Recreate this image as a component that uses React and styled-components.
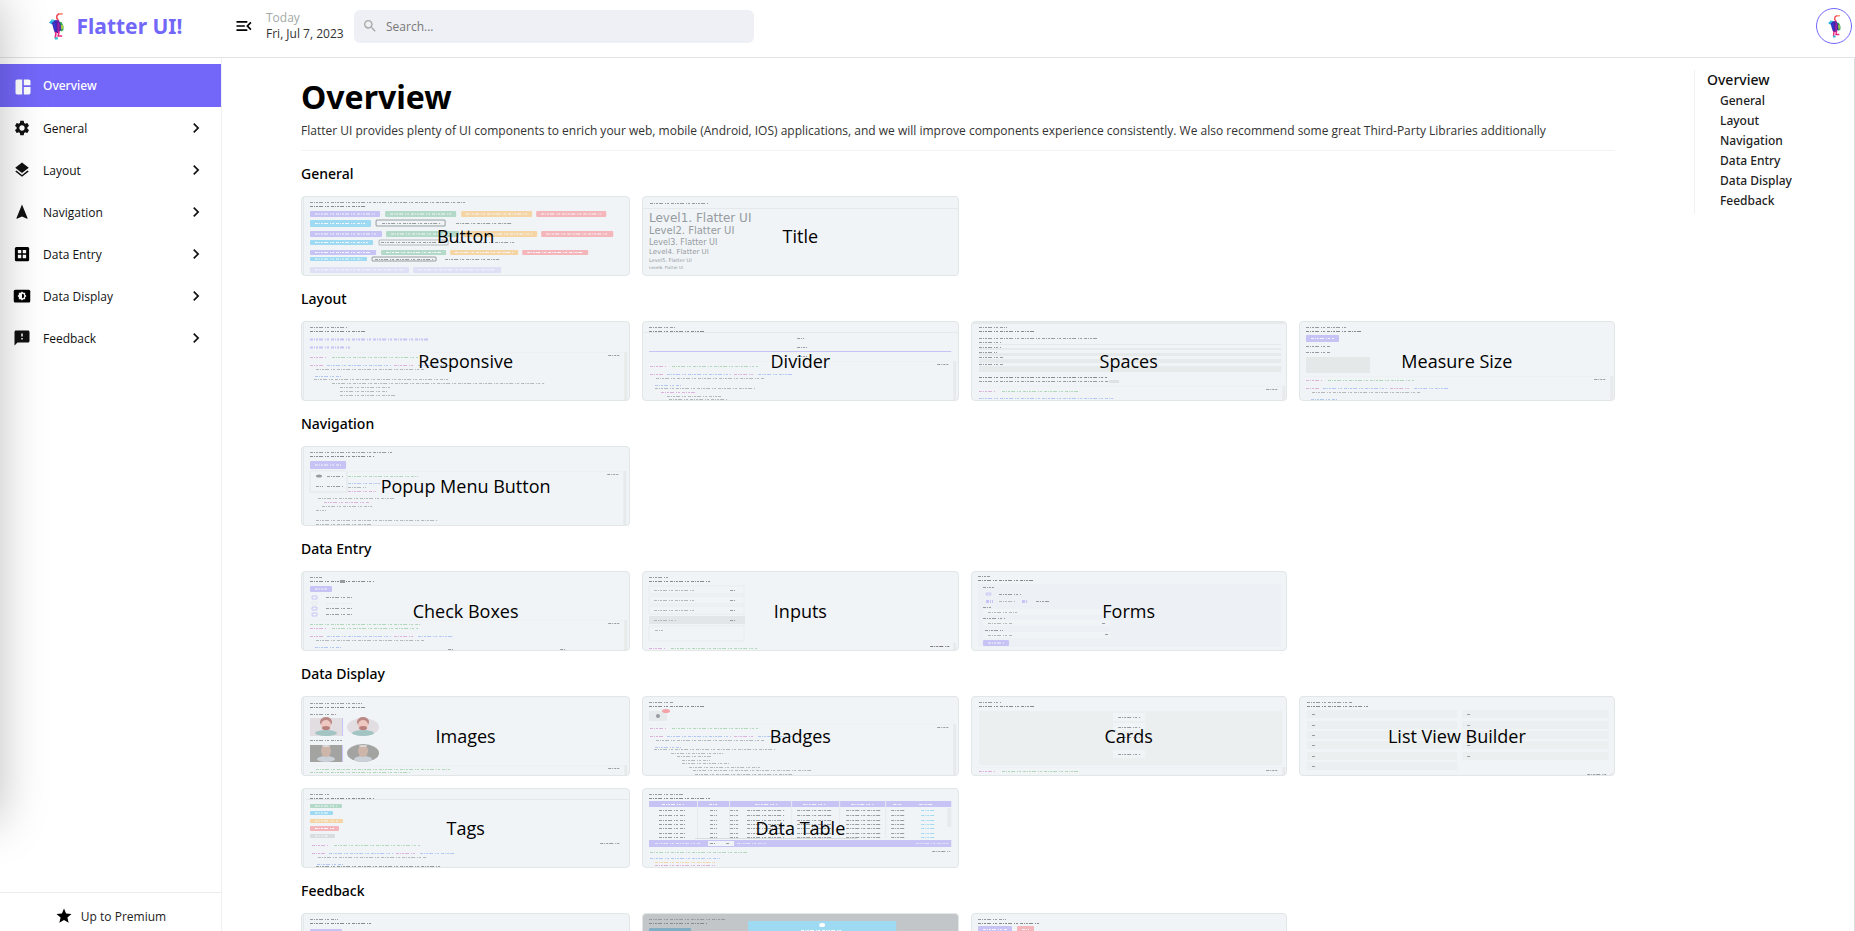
import React from "react";
import styled, { createGlobalStyle } from "styled-components";
import {
  MdSpaceDashboard,
  MdSettings,
  MdLayers,
  MdNavigation,
  MdFeedback,
  MdChevronRight,
  MdMenuOpen,
  MdSearch,
  MdStar,
} from "react-icons/md";

const c = {
  accent: "#7367fa",
  ink: "#000",
  purple: "#c7c3f5",
  pale: "#dfe0f5",
  green: "#b3d9c8",
  orange: "#f4d5a3",
  red: "#f4b6bb",
  blue: "#9fdaf3",
  text: "#969b9f",
  soft: "#b3b8bb",
  gray: "#e6eaeb",
  card: "#f0f4f7",
  pinkCode: "#dcb2dd",
  greenCode: "#b0d8b8",
  blueCode: "#b2c8f4",
};

const headingFont = `"Noto Sans", "Open Sans", sans-serif`;

const GlobalStyle = createGlobalStyle`
  * { box-sizing: border-box; }
  body {
    margin: 0;
    background: #fff;
    color: ${c.ink};
    font-family: "Open Sans", "Noto Sans", sans-serif;
    font-size: 12px;
  }
  button, input { font: inherit; color: inherit; }
`;

const Page = styled.div`
  height: 100vh;
  display: flex;
  flex-direction: column;
  overflow: hidden;
`;

const DrawerShade = styled.div`
  position: fixed;
  top: 0;
  bottom: 110px;
  left: -304px;
  width: 304px;
  box-shadow: 0 0 44px rgba(0, 0, 0, 0.25);
  pointer-events: none;
  z-index: 5;
`;

const Header = styled.header`
  flex: none;
  height: 58px;
  padding: 0 3px 5px 0;
  display: flex;
  align-items: center;
  border-bottom: 1px solid #e2e3e5;
`;

const Brand = styled.a`
  width: 222px;
  padding-left: 9px;
  display: flex;
  align-items: center;
  justify-content: center;
  gap: 13px;
  color: ${c.accent};
  font-family: ${headingFont};
  font-size: 21px;
  font-weight: 700;
  text-decoration: none;
`;

const IconButton = styled.button`
  margin: 0 12px;
  padding: 0;
  width: 20px;
  height: 20px;
  border: 0;
  background: none;
  display: grid;
  place-items: center;
`;

const DateBlock = styled.div`
  width: 88px;
  line-height: 16px;
  color: #333;
`;

const Today = styled.div`
  color: #a3aaa5;
`;

const Search = styled.label`
  width: 400px;
  height: 33px;
  padding: 0 8px;
  display: flex;
  align-items: center;
  gap: 8px;
  border-radius: 6px;
  background: #eff0f5;
  color: #a3aaa5;
`;

const SearchInput = styled.input`
  flex: 1;
  border: 0;
  outline: 0;
  padding: 0;
  background: none;
  color: #333;
  &::placeholder { color: #777; opacity: 1; }
`;

const Avatar = styled.button`
  margin-left: auto;
  width: 36px;
  height: 36px;
  padding: 0;
  border: 1px solid ${c.accent};
  border-radius: 50%;
  background: #fff;
  display: grid;
  place-items: center;
`;

const Body = styled.div`
  flex: 1;
  min-height: 0;
  display: flex;
`;

const Sidebar = styled.aside`
  flex: none;
  width: 222px;
  border-right: 1px solid #f0f0f1;
  display: flex;
  flex-direction: column;
`;

const Nav = styled.nav`
  flex: 1;
  padding-top: 6px;
`;

const NavItem = styled.a`
  height: ${(p) => (p.$active ? 43 : 42)}px;
  padding: 0 15px 0 13px;
  display: flex;
  align-items: center;
  gap: 12px;
  color: ${(p) => (p.$active ? "#fff" : "#111")};
  background: ${(p) => (p.$active ? c.accent : "none")};
  font-family: ${(p) => (p.$active ? headingFont : "inherit")};
  font-weight: ${(p) => (p.$active ? 500 : 400)};
  text-decoration: none;
`;

const NavLabel = styled.span`
  flex: 1;
`;

const Premium = styled.button`
  height: 39px;
  padding: 8px 0 0;
  border: 0;
  border-top: 1px solid #ececee;
  background: none;
  color: #222;
  display: flex;
  align-items: center;
  justify-content: center;
  gap: 8px;
`;

const Main = styled.main`
  flex: 1;
  min-width: 0;
  padding-top: 12px;
  display: flex;
  border-right: 1px solid #d8dcde;
  overflow-y: auto;
  scrollbar-width: none;
`;

const Content = styled.div`
  flex: 1;
  min-width: 0;
  padding: 5px 79px 0;
`;

const PageTitle = styled.h1`
  margin: 0;
  font-family: ${headingFont};
  font-size: 32px;
  line-height: 44px;
  font-weight: 700;
`;

const Intro = styled.p`
  margin: 4px 0 0;
  padding-bottom: 11px;
  border-bottom: 1px solid #f3f3f4;
  line-height: 16px;
  color: #333;
`;

const Section = styled.section`
  padding-top: 13px;
`;

const SectionTitle = styled.h2`
  margin: 0 0 12px;
  font-family: ${headingFont};
  font-size: 14px;
  line-height: 20px;
  font-weight: 500;
`;

const CardGrid = styled.div`
  display: grid;
  grid-template-columns: 329fr 316fr 316fr 316fr;
  gap: 12px;
`;

const Card = styled.button`
  min-width: 0;
  height: 80px;
  padding: 0;
  display: grid;
  border: 1px solid #e1e6e7;
  border-radius: 4px;
  background: ${(p) => (p.$dim ? "#c3c6c9" : c.card)};
  overflow: hidden;
`;

const Preview = styled.svg`
  grid-area: 1 / 1;
  width: 100%;
  height: 78px;
  display: block;
`;

const CardTitle = styled.span`
  grid-area: 1 / 1;
  place-self: center;
  font-size: 18px;
  line-height: 24px;
`;

const Toc = styled.nav`
  flex: none;
  align-self: flex-start;
  width: 160px;
  height: 144px;
  padding-left: 12px;
  border-left: 1px solid #f0f0f2;
  font-family: ${headingFont};
  font-weight: 500;
`;

const TocTitle = styled.a`
  display: block;
  color: #111;
  font-size: 14px;
  line-height: 20px;
  text-decoration: none;
`;

const TocList = styled.ul`
  margin: 0;
  padding: 1px 0 0 13px;
  list-style: none;
`;

const TocLink = styled.a`
  display: block;
  color: #222;
  line-height: 20px;
  text-decoration: none;
`;

function Mascot({ width, height }) {
  return (
    <svg width={width} height={height} viewBox="0 0 15 27" aria-hidden="true">
      <path d="M13.5.8H10L8 2.500 7.700 5l1.600 2.500L8.500 9.500" fill="none" stroke="#f04a5c" strokeWidth="1.6" />
      <path d="M10 .8h3.500" stroke="#ff9a7a" strokeWidth="1.6" />
      <path d="M0 9.500 3 7l3 0 .5 3L3 11.500z" fill="#1ba8e8" />
      <path d="M2 6.500h3v2H2z" fill="#46c8d8" />
      <path d="M10 9h2.500l2 4v4l-2 1.500-3-2z" fill="#35a853" />
      <path d="M12 12h2v4h-2z" fill="#a4c93c" />
      <path d="M3 10 6.500 7 10 7.500 11.500 11 12 17l-3 3H6L4.500 16z" fill="#4b22b0" />
      <path d="M8.500 8 10.500 11l0 7-2 1z" fill="#a0229c" />
      <path d="M4 10.500 6 9l1 6-1 3z" fill="#2a3ed0" />
      <path d="m7 19-.7 6M10 18.500l-.8 4.500h4" fill="none" stroke="#ea2a80" strokeWidth="1.7" />
      <path d="M5.800 24.200h3v2.300h-3z" fill="#34b8d8" />
    </svg>
  );
}

function DataEntryIcon() {
  return (
    <svg width="18" height="18" viewBox="0 0 24 24" aria-hidden="true">
      <rect x="2.5" y="2.5" width="19" height="19" rx="2" fill="#000" />
      <path d="M6.500 6.500h4.500v4.500H6.500zM13 6.500h4.500v4.500H13zM6.500 13h4.500v4.500H6.500zM13 13h4.500v4.500H13z" fill="#fff" />
    </svg>
  );
}

function DataDisplayIcon() {
  return (
    <svg width="18" height="18" viewBox="0 0 24 24" aria-hidden="true">
      <rect x="1" y="3.5" width="22" height="17" rx="2" fill="#000" />
      <path d="m12 6 1.800 1.800h2.400v2.400L18 12l-1.800 1.800v2.400h-2.400L12 18l-1.800-1.800H7.800v-2.400L6 12l1.800-1.800V7.800h2.400z" fill="#fff" />
      <path d="M12 9a3 3 0 0 1 0 6z" fill="#000" />
    </svg>
  );
}

/* Marks of a preview: t = a line of tiny writing, r = block, o = outlined block,
   w = button with writing on it, x = readable text, e = ellipse. */
const writing = "3 1 1 1 2 1 4 2 1 1 2 2";

function Mark({ m }) {
  const [kind, x, y, a, b, d] = m;
  switch (kind) {
    case "t":
      return (
        <line x1={x} x2={x + a} y1={y + 0.5} y2={y + 0.5} stroke={b || c.text} strokeWidth={d || 1} strokeDasharray={writing} />
      );
    case "r":
      return <rect x={x} y={y} width={a} height={b} fill={d} />;
    case "o":
      return <rect x={x} y={y} width={a} height={b} rx="1" fill="none" stroke={d} strokeWidth="1" />;
    case "e":
      return <ellipse cx={x} cy={y} rx={a} ry={b} fill={d} />;
    case "x":
      return <text x={x} y={y} fontSize={a} fill={c.text} fontFamily="DejaVu Sans, sans-serif">{b}</text>;
    default:
      return (
        <g>
          <rect x={x} y={y} width={a} height={b} rx="1" fill={d} />
          <line x1={x + 5} x2={x + a - 5} y1={y + b / 2} y2={y + b / 2} stroke="#f5f7fc" strokeWidth="1" strokeDasharray={writing} />
        </g>
      );
  }
}

const head = (x, w1, w2) => [["t", x, 5, w1], ["t", x, 9, w2, "#85898c", 1]];
const code = (y, x = 7) => [
  ["t", x, y, 16, c.pinkCode],
  ["t", x + 22, y, 86, c.greenCode],
  ["t", x, y + 8, 14, c.pinkCode],
  ["t", x + 17, y + 8, 64, c.blueCode],
  ["t", x + 84, y + 8, 20, c.pinkCode],
  ["t", x + 108, y + 8, 36, c.blueCode],
  ["t", x + 6, y + 12, 108, c.soft],
  ["t", x + 5, y + 19, 26, c.blueCode],
];
const buttonRow = (y, h, list) => {
  const tones = [c.purple, c.green, c.orange, c.red];
  return list.map(([x, w], i) => ["w", x, y, w, h, tones[i]]);
};
const scrollbar = (x, y) => [["r", 4, y, x - 2, 1, "#edf1f3"], ["r", x, y, 3, 78 - y, c.gray], ["t", x - 16, y + 3, 11]];
const drawnPortrait = (cx, cy) => [
  ["e", cx, cy + 8, 11, 3, "#a2c4c3"],
  ["e", cx, cy - 3, 6, 5, "#b98784"],
  ["e", cx, cy, 5, 5, "#edc7c0"],
  ["e", cx, cy + 3, 4, 2, "#b97f7b"],
];
const photoPortrait = (cx, cy) => [
  ["e", cx, cy + 7, 9, 3, "#cbd1d8"],
  ["e", cx, cy - 1, 5, 6, "#cdb5aa"],
  ["e", cx, cy - 6, 4, 1, "#dcd8d6"],
];

const previews = {
  button: [
    ...head(8, 155, 56),
    ...buttonRow(14, 6, [[8, 70], [83, 71], [159, 71], [234, 70]]),
    ["w", 8, 23, 61, 7, c.blue], ["o", 74, 23, 69, 6, c.text], ["t", 80, 26, 58], ["t", 154, 26, 55],
    ...buttonRow(34, 6, [[8, 72], [84, 73], [161, 74], [239, 72]]),
    ["w", 8, 43, 63, 5, c.blue], ["o", 77, 43, 69, 5, c.soft], ["t", 79, 45, 64], ["t", 151, 45, 63],
    ...buttonRow(53, 5, [[8, 66], [79, 65], [148, 68], [220, 66]]),
    ["w", 8, 60, 57, 4, c.blue], ["o", 70, 60, 64, 4, c.text], ["t", 73, 62, 58], ["t", 143, 62, 54],
    ["w", 8, 70, 99, 6, c.pale], ["w", 111, 70, 88, 6, c.pale],
  ],
  title: [
    ["t", 7, 6, 58], ["t", 7, 11, 62, "#85898c"], ["r", 0, 11, 316, 1, "#e5e9eb"],
    ["x", 6, 25, 12, "Level1. Flatter UI"],
    ["x", 6, 37, 10, "Level2. Flatter UI"],
    ["x", 6, 48, 8, "Level3. Flatter UI"],
    ["x", 6, 57, 7, "Level4. Flatter UI"],
    ["x", 6, 65, 5, "Level5. Flatter UI"],
    ["x", 6, 72, 4, "Level6. Flatter UI"],
  ],
  responsive: [
    ...head(8, 38, 56), ["t", 8, 17, 120, c.purple, 2], ["t", 8, 25, 40, c.purple, 2],
    ...code(35, 8), ["t", 12, 57, 134, c.soft], ["t", 30, 61, 212, c.soft],
    ["t", 38, 65, 50, c.soft], ["t", 38, 69, 48, c.soft], ["t", 38, 73, 55, c.soft], ...scrollbar(322, 30),
  ],
  divider: [
    ...head(6, 26, 56), ["r", 0, 10, 316, 1, "#e5e9eb"], ["t", 154, 16, 7], ["t", 154, 25, 10],
    ["r", 6, 29, 302, 1, c.purple], ["t", 154, 34, 10],
    ...code(44), ["t", 12, 66, 100, c.soft], ["t", 18, 70, 36, c.pinkCode], ["t", 24, 74, 54, c.soft], ["t", 26, 77, 58, c.soft],
    ...scrollbar(310, 39),
  ],
  spaces: [
    ["r", 0, 0, 316, 2, c.gray], ...head(7, 28, 56),
    ["t", 7, 16, 118], ["t", 7, 20, 22], ["r", 7, 22, 302, 1, c.gray], ["t", 7, 25, 22], ["r", 7, 26, 302, 2, c.gray],
    ["t", 7, 30, 18], ["r", 7, 31, 302, 3, c.gray], ["t", 7, 35, 24], ["r", 7, 37, 302, 4, c.gray],
    ["t", 7, 42, 24], ["r", 7, 44, 302, 6, c.gray], ["t", 7, 55, 128, "#85898c"], ["t", 7, 59, 130],
    ["r", 137, 58, 10, 3, "#dde2e2"], ["t", 7, 69, 16, c.pinkCode], ["t", 30, 69, 78, c.greenCode],
    ["t", 7, 76, 134, c.blueCode], ...scrollbar(310, 64),
  ],
  measure: [
    ...head(6, 42, 56), ["w", 6, 13, 33, 7, c.purple], ["t", 6, 24, 24], ["t", 6, 30, 24],
    ["r", 6, 35, 64, 16, "#e4e8e9"], ...code(58, 6), ...scrollbar(310, 54),
  ],
  popup: [
    ...head(8, 84, 64), ["w", 8, 14, 36, 8, c.purple],
    ["t", 46, 29, 70, c.greenCode], ["t", 46, 36, 32, c.blueCode], ["t", 46, 40, 18, c.soft], ["t", 46, 44, 28, c.pinkCode],
    ["o", 8, 24, 37, 21, "#e2e6e8"], ["e", 17, 29, 3, 1.5, c.text], ["t", 25, 29, 16], ["t", 14, 39, 7], ["t", 25, 39, 16],
    ["t", 16, 51, 76, c.soft], ["t", 22, 55, 46, c.pinkCode], ["t", 20, 59, 50, c.soft], ["t", 14, 63, 10, c.soft],
    ["t", 14, 73, 122, c.soft], ["t", 14, 77, 56, c.soft], ...scrollbar(321, 24),
  ],
  checks: [
    ["t", 8, 5, 12], ["t", 8, 9, 64, "#85898c"], ["r", 38, 8, 5, 3, c.text], ["w", 8, 14, 22, 6, c.purple],
    ...[25, 31, 36, 42].flatMap((y, i) => [["o", 10, y - 1, 5, 3, i === 1 ? c.gray : c.purple], ["t", 24, y, 26, i === 1 ? c.gray : c.text]]),
    ...code(56, 8), ["t", 8, 52, 110, c.greenCode], ["t", 146, 77, 5], ["t", 258, 77, 5], ...scrollbar(322, 48),
  ],
  inputs: [
    ...head(6, 20, 62),
    ...[14, 24, 34].flatMap((y) => [["o", 6, y, 95, 8, "#e8ecef"], ["t", 11, y + 4, 40, c.soft], ["t", 87, y + 4, 5]]),
    ["r", 6, 44, 96, 8, "#e3e6e8"], ["t", 11, 48, 22, c.soft], ["t", 87, 48, 5],
    ["o", 6, 54, 95, 15, "#e8ecef"], ["t", 12, 58, 9, c.soft],
    ["t", 6, 76, 16, c.pinkCode], ["t", 28, 76, 86, c.greenCode], ["t", 287, 74, 20, "#777"], ["r", 310, 71, 3, 7, c.gray],
  ],
  forms: [
    ["t", 6, 4, 12], ["t", 6, 8, 56, "#85898c"], ["r", 6, 12, 303, 63, "#edf1f5"], ["t", 11, 15, 11],
    ["o", 14, 21, 5, 2, c.purple], ["t", 27, 22, 22], ["t", 14, 29, 7, c.purple, 3], ["t", 27, 29, 16, c.soft], ["t", 50, 29, 6, c.purple, 3], ["t", 64, 29, 14],
    ["t", 11, 35, 9], ["r", 11, 37, 127, 6, c.card], ["t", 16, 40, 30, c.soft],
    ["t", 11, 46, 22], ["r", 11, 48, 127, 6, c.card], ["t", 16, 51, 24, c.soft], ["t", 130, 51, 4],
    ["t", 13, 58, 18], ["r", 11, 60, 127, 6, c.card], ["t", 16, 63, 24, c.soft], ["t", 133, 62, 4],
    ["w", 11, 68, 26, 6, c.purple],
  ],
  images: [
    ["t", 8, 6, 52], ["t", 8, 10, 56, "#85898c"], ["t", 8, 17, 26],
    ["r", 8, 21, 32, 18, "#e1dde1"], ["r", 40, 21, 1, 18, c.purple], ["e", 61, 30, 16, 9, "#e1dde1"],
    ["t", 8, 43, 32], ["r", 8, 48, 32, 17, "#a3a4a2"], ["r", 40, 48, 1, 17, c.purple], ["e", 61, 56, 16, 9, "#a3a4a2"],
    ...drawnPortrait(24, 28), ...drawnPortrait(61, 28), ...photoPortrait(24, 55), ...photoPortrait(61, 55),
    ["t", 14, 72, 134, c.greenCode], ["t", 8, 75, 100, c.greenCode], ...scrollbar(322, 68),
  ],
  badges: [
    ...head(6, 24, 56), ["r", 6, 14, 18, 10, c.gray], ["e", 15, 19, 2, 2, c.text], ["e", 23, 14, 4, 2, "#f2a4aa"],
    ...code(31), ["t", 11, 52, 122, c.soft], ["t", 28, 56, 52, c.soft], ["t", 34, 59, 34, c.soft],
    ["t", 39, 63, 28, c.soft], ["t", 39, 66, 48, c.soft], ["t", 46, 70, 72, c.soft], ["t", 50, 73, 120, c.soft], ["t", 52, 77, 98, c.soft],
    ...scrollbar(310, 27),
  ],
  cards: [
    ...head(7, 22, 56), ["r", 7, 14, 303, 54, "#ebefef"],
    ...[16, 26, 36, 53].flatMap((y) => [["r", 141, y, 32, 8, c.card], ["t", 146, y + 4, 22]]),
    ["t", 7, 74, 16, c.pinkCode], ["t", 30, 74, 78, c.greenCode], ...scrollbar(310, 70),
  ],
  list: [
    ...head(7, 46, 62),
    ...[13, 24, 34, 44, 55, 65].map((y) => ["r", 7, y, 150, 8, "#ebefef"]),
    ...[13, 24, 34, 44, 55].map((y) => ["r", 162, y, 146, 8, "#ebefef"]),
    ...[17, 28, 38, 48, 59, 69].map((y) => ["t", 12, y, 4]),
    ...[17, 28, 38, 48, 59].map((y) => ["t", 167, y, 3]),
    ["t", 287, 77, 20], ["r", 310, 76, 3, 2, c.gray],
  ],
  tags: [
    ...head(8, 20, 64), ["r", 4, 10, 322, 1, "#e3e7e9"],
    ["w", 8, 15, 32, 4, c.green], ["w", 8, 22, 23, 4, c.blue], ["w", 8, 30, 33, 4, c.orange], ["w", 8, 37, 29, 5, c.red], ["w", 8, 45, 25, 4, "#d8dcdc"],
    ...code(56, 10), ["t", 14, 77, 124, c.text], ["t", 298, 54, 21],
  ],
  table: [
    ...head(6, 34, 62), ["r", 6, 12, 302, 6, c.purple],
    ...[[19, 22], [66, 8], [112, 22], [160, 22], [208, 22], [250, 8], [276, 15]].map(([x, w]) => ["t", x, 15, w, "#f5f7fc"]),
    ...[21, 26, 31, 35, 39, 44, 48].flatMap((y) => [
      ["t", 16, y, 26], ["t", 67, y, 7], ["t", 87, y, 8], ["t", 104, y, 38], ["t", 154, y, 36], ["t", 203, y, 35], ["t", 248, y, 13], ["t", 278, y, 13, c.blue],
    ]),
    ...[54, 86, 148, 196, 242].map((x) => ["r", x, 12, 1, 37, "#e7eaec"]),
    ["r", 52, 49, 162, 1, "#d9dcdf"], ["r", 304, 19, 4, 19, c.gray],
    ["r", 6, 51, 302, 7, c.purple], ["t", 12, 54, 46, "#e6e4fb"], ["r", 65, 52, 26, 5, c.card],
    ["t", 67, 54, 5], ["t", 83, 54, 4], ["t", 94, 54, 30, "#e6e4fb"], ["t", 273, 54, 32, "#e6e4fb"],
    ["t", 7, 63, 98, c.greenCode], ["t", 7, 69, 70, c.blueCode], ["t", 12, 73, 60, c.orange], ["t", 12, 76, 60, c.pinkCode],
    ["t", 289, 62, 18],
  ],
  toast: [...head(8, 28, 62), ["w", 8, 15, 32, 8, c.purple]],
  alert: [
    ...head(6, 76, 58), ["w", 6, 14, 42, 8, "#82aec4"], ["r", 105, 7, 148, 80, c.blue],
    ["e", 179, 11, 3, 2, "#fff"], ["t", 158, 17, 42, "#fff", 3],
  ],
  modal: [...head(6, 28, 62), ["w", 6, 12, 34, 7, c.purple], ["w", 45, 12, 17, 7, c.red]],
};

const sections = [
  ["General", [["Button", "button"], ["Title", "title"]]],
  ["Layout", [["Responsive", "responsive"], ["Divider", "divider"], ["Spaces", "spaces"], ["Measure Size", "measure"]]],
  ["Navigation", [["Popup Menu Button", "popup"]]],
  ["Data Entry", [["Check Boxes", "checks"], ["Inputs", "inputs"], ["Forms", "forms"]]],
  ["Data Display", [["Images", "images"], ["Badges", "badges"], ["Cards", "cards"], ["List View Builder", "list"], ["Tags", "tags"], ["Data Table", "table"]]],
  ["Feedback", [["", "toast"], ["", "alert"], ["", "modal"]]],
];

const navItems = [
  ["Overview", <MdSpaceDashboard size={20} />],
  ["General", <MdSettings size={18} />],
  ["Layout", <MdLayers size={18} />],
  ["Navigation", <MdNavigation size={18} />],
  ["Data Entry", <DataEntryIcon />],
  ["Data Display", <DataDisplayIcon />],
  ["Feedback", <MdFeedback size={18} />],
];

const NavIcon = styled.span`
  width: 18px;
  height: 18px;
  display: grid;
  place-items: center;
`;

function ComponentCard({ title, preview, wide }) {
  return (
    <Card type="button" aria-label={title || preview} $dim={preview === "alert"}>
      <Preview viewBox={`0 0 ${wide ? 327 : 314} 78`} preserveAspectRatio="none" aria-hidden="true">
        {wide && <rect x="1" width="1" height="78" fill="#e3e9ea" />}
        {previews[preview].map((m, i) => (
          <Mark key={i} m={m} />
        ))}
      </Preview>
      {title && <CardTitle>{title}</CardTitle>}
    </Card>
  );
}

export default function App() {
  return (
    <Page>
      <GlobalStyle />
      <DrawerShade />
      <Header>
        <Brand href="#overview">
          <Mascot width={15} height={27} />
          Flatter UI!
        </Brand>
        <IconButton type="button" aria-label="Toggle menu">
          <MdMenuOpen size={20} />
        </IconButton>
        <DateBlock>
          <Today>Today</Today>
          Fri, Jul 7, 2023
        </DateBlock>
        <Search>
          <MdSearch size={16} />
          <SearchInput type="text" placeholder="Search..." aria-label="Search" />
        </Search>
        <Avatar type="button" aria-label="Account">
          <Mascot width={13} height={23} />
        </Avatar>
      </Header>
      <Body>
        <Sidebar>
          <Nav aria-label="Components">
            {navItems.map(([label, icon], i) => (
              <NavItem key={label} href={`#${label}`} $active={i === 0}>
                <NavIcon>{icon}</NavIcon>
                <NavLabel>{label}</NavLabel>
                {i > 0 && <MdChevronRight size={20} />}
              </NavItem>
            ))}
          </Nav>
          <Premium type="button">
            <MdStar size={18} color="#000" />
            Up to Premium
          </Premium>
        </Sidebar>
        <Main>
          <Content>
            <PageTitle>Overview</PageTitle>
            <Intro>
              Flatter UI provides plenty of UI components to enrich your web, mobile (Android, IOS) applications, and we
              will improve components experience consistently. We also recommend some great Third-Party Libraries
              additionally
            </Intro>
            {sections.map(([name, cards]) => (
              <Section key={name} id={name}>
                <SectionTitle>{name}</SectionTitle>
                <CardGrid>
                  {cards.map(([title, preview], i) => (
                    <ComponentCard key={preview} title={title} preview={preview} wide={i % 4 === 0} />
                  ))}
                </CardGrid>
              </Section>
            ))}
          </Content>
          <Toc aria-label="On this page">
            <TocTitle href="#overview">Overview</TocTitle>
            <TocList>
              {sections.map(([name]) => (
                <li key={name}>
                  <TocLink href={`#${name}`}>{name}</TocLink>
                </li>
              ))}
            </TocList>
          </Toc>
        </Main>
      </Body>
    </Page>
  );
}
